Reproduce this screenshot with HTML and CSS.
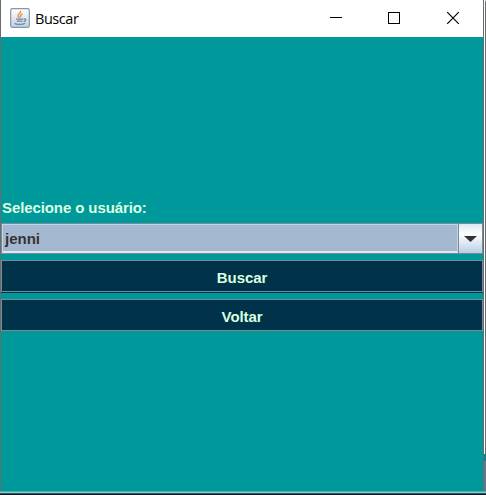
FILE: index.html
```html
<!DOCTYPE html>
<html lang="pt">
<head>
<meta charset="utf-8">
<title>Buscar</title>
<link rel="stylesheet" href="styles.css">
</head>
<body>
<div class="window">
  <header class="titlebar">
    <svg class="app-icon" width="20" height="20" viewBox="0 0 20 20">
      <defs><linearGradient id="g" x1="0" y1="0" x2="0" y2="1"><stop offset="0" stop-color="#fff"/><stop offset="1" stop-color="#c3d0dd"/></linearGradient></defs>
      <rect x=".7" y=".7" width="18.6" height="18.6" rx="1.5" fill="url(#g)" stroke="#8597a8" stroke-width="1.2"/>
      <path d="M10.5 3c1 2-3 3-2.400 5 .2 1 1 1.500 1.400 2M12.500 6c-2 .8-2.500 2-1.500 3.200" fill="none" stroke="#ec9448" stroke-width="1.500"/>
      <path d="M6 11.200h7.500M6.800 13.200h5.800M14 11c2.500-.5 2.300 2-.3 2.600M4.500 15.400c2 1.400 8.500 1.300 10.500-.2" fill="none" stroke="#668aac" stroke-width="1.300"/>
    </svg>
    <span class="title">Buscar</span>
    <svg class="controls" width="153" height="37" viewBox="0 0 153 37" fill="none" stroke="#000">
      <path d="M0 17.500h12" shape-rendering="crispEdges"/>
      <rect x="58.500" y="12.500" width="11" height="11"/>
      <path d="M117.200 12.200l11.600 11.600M128.800 12.200l-11.600 11.600" stroke-width="1.200"/>
    </svg>
  </header>
  <main class="content">
    <label class="label">Selecione o usuário:</label>
    <div class="combo">
      <div class="value">jenni</div>
      <div class="arrow"><svg width="13" height="6" viewBox="0 0 13 6"><path d="M0 0h13L6.500 6z" fill="#333"/></svg></div>
    </div>
    <button class="button first"><span>Buscar</span></button>
    <button class="button"><span>Voltar</span></button>
  </main>
</div>
<div class="edge"><i class="edge-light"></i><i class="edge-teal"></i><i class="edge-slate"></i></div>
<footer class="bottom"></footer>
</body>
</html>
```
FILE: styles.css
```css
* { box-sizing: border-box; }
body {
  margin: 0;
  width: 486px;
  height: 495px;
  display: grid;
  grid-template-columns: 484px 2px;
  grid-template-rows: 491px 4px;
  overflow: hidden;
  background: #fff;
  font-family: "Liberation Sans", Arial, sans-serif;
}
.window {
  border: solid #696c6f;
  border-width: 0 1px;
  background: #00999b;
}
.titlebar {
  height: 37px;
  background: #fff;
  display: flex;
  align-items: center;
  padding-left: 9px;
}
.app-icon { margin-top: -2px; }
.title {
  margin-left: 5px;
  font: 14.5px/20px "Open Sans", "Noto Sans", sans-serif;
  letter-spacing: -0.45px;
  color: #000;
}
.controls { margin-left: auto; }
.content {
  display: flex;
  flex-direction: column;
  padding-top: 161px;
}
.label {
  height: 25px;
  padding-left: 1px;
  font-size: 15px;
  font-weight: bold;
  line-height: 20px;
  letter-spacing: -0.1px;
  color: #d9ffe0;
}
.combo {
  height: 31px;
  display: flex;
  border: 1px solid #7a8a99;
}
.value {
  flex: 1;
  border: 1px solid #c0d4ea;
  border-bottom: 2px solid #dce7f2;
  background: #a3b8cf;
  padding-left: 2px;
  font-size: 15px;
  font-weight: bold;
  line-height: 28px;
  color: #333;
}
.arrow {
  width: 24px;
  display: flex;
  align-items: center;
  justify-content: center;
  border-left: 1px solid #7a8a99;
  background: linear-gradient(#dce8f4, #fff 35%, #b8cfe5);
}
.button {
  height: 32px;
  margin: 0 0 7px;
  padding: 3px 0 0;
  border: 1px solid #7a8a99;
  background: #003249;
  color: #d9ffe0;
  font: bold 15px/20px "Liberation Sans", Arial, sans-serif;
  letter-spacing: -0.1px;
}
.first {
  margin-top: 6px;
  box-shadow: 0 1px #003249;
}
.edge { display: flex; flex-direction: column; }
.edge i { display: block; }
.edge-light { height: 454px; border-left: 1px solid #fff; border-right: 1px solid #696c6f; border-top: 2px solid #fff; }
.edge-teal { height: 7px; background: #00898b; }
.edge-slate { flex: 1; background: #64798b; }
.bottom {
  grid-column: 1 / -1;
  background: linear-gradient(#58aaad 0 1px, #a5bec1 1px 2px, #006c70 2px 3px, #111a20 3px);
}
```
